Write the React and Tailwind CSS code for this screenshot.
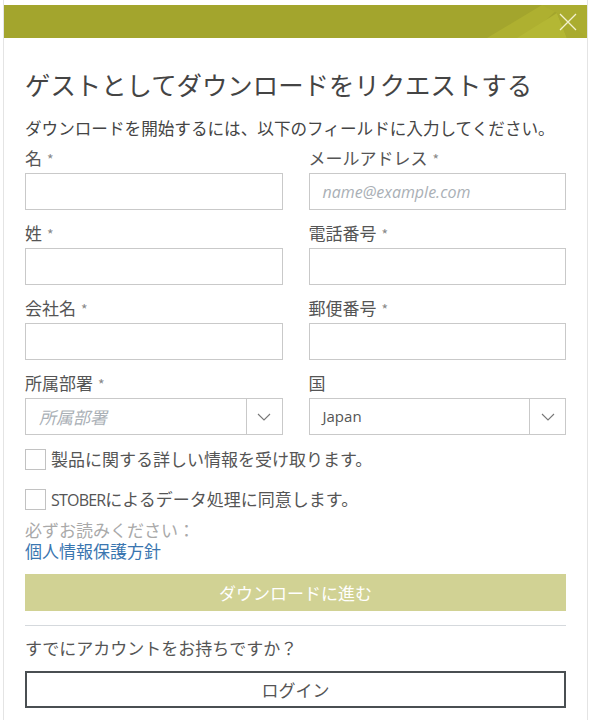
import React from "react";

const jp = { fontFamily: '"Noto Sans CJK JP", "Noto Sans", sans-serif' };

function Label({ children }) {
  return (
    <div className="h-[24px] leading-[24px] text-[17px] text-[#555] mb-[3px]">
      {children}
      {children !== "国" && <span className="text-[#888] ml-[5px] text-[14px]">*</span>}
    </div>
  );
}

function Input({ placeholder }) {
  return (
    <div className="h-[37px] border border-[#c9c9c9] bg-white flex items-center px-[13px]">
      {placeholder && (
        <span className="italic text-[#aab0b6] text-[16px]" style={{ fontFamily: '"Open Sans", sans-serif' }}>
          {placeholder}
        </span>
      )}
    </div>
  );
}

function Chevron() {
  return (
    <svg width="14" height="8" viewBox="0 0 14 8" fill="none" stroke="#777" strokeWidth="1.1">
      <path d="M1 1 L7 7 L13 1" />
    </svg>
  );
}

function Select({ value, placeholder }) {
  return (
    <div className="h-[37px] border border-[#c9c9c9] bg-white flex">
      <div className="flex-1 flex items-center px-[13px]">
        {placeholder ? (
          <span className="italic text-[#aab0b6] text-[17px]">{placeholder}</span>
        ) : (
          <span className="text-[#555] text-[15px]" style={{ fontFamily: '"Open Sans", sans-serif' }}>{value}</span>
        )}
      </div>
      <div className="w-[36px] border-l border-[#c9c9c9] flex items-center justify-center">
        <Chevron />
      </div>
    </div>
  );
}

function Field({ label, children }) {
  return (
    <div className="flex flex-col">
      <Label>{label}</Label>
      {children}
    </div>
  );
}

function Checkbox({ children }) {
  return (
    <div className="flex items-center gap-[5px] h-[22px]">
      <div className="w-[21px] h-[21px] border border-[#c2c2c2] bg-white shrink-0" />
      <div className="text-[17px] leading-[22px] text-[#555] whitespace-nowrap">{children}</div>
    </div>
  );
}

export default function App() {
  return (
    <div className="w-[591px] h-[720px] bg-white overflow-hidden" style={jp}>
      <div className="ml-[3px] w-[585px] h-[720px] border-l border-r border-[#e4e4e4] bg-white pt-[5px]">
        <div className="relative h-[33px] bg-[#a3a52d] overflow-hidden">
          <svg className="absolute right-0 top-0" width="100" height="33" viewBox="0 0 100 33">
            <polygon points="0,33 55,0 75,0 40,33" fill="#aeb030" />
            <polygon points="30,33 70,8 80,33" fill="#b4b734" />
            <polygon points="55,0 100,0 100,33 80,33 70,8" fill="#abad30" />
            <polygon points="70,8 100,33 80,33" fill="#a9ab2f" />
          </svg>
          <svg className="absolute right-[10px] top-[8px]" width="18" height="18" viewBox="0 0 18 18" stroke="#f3f1d0" strokeWidth="1.3">
            <path d="M1 1 L17 17 M17 1 L1 17" />
          </svg>
        </div>
        <div className="px-[21px]">
          <h1 className="mt-[28px] h-[36px] leading-[36px] text-[25.4px] text-[#444] font-normal whitespace-nowrap">
            ゲストとしてダウンロードをリクエストする
          </h1>
          <p className="mt-[14px] h-[24px] leading-[24px] text-[16.6px] text-[#444] whitespace-nowrap">
            ダウンロードを開始するには、以下のフィールドに入力してください。
          </p>
          <div className="mt-[6px] grid grid-cols-2 gap-x-[26px] gap-y-[11px]">
            <Field label="名"><Input /></Field>
            <Field label="メールアドレス"><Input placeholder="name@example.com" /></Field>
            <Field label="姓"><Input /></Field>
            <Field label="電話番号"><Input /></Field>
            <Field label="会社名"><Input /></Field>
            <Field label="郵便番号"><Input /></Field>
            <Field label="所属部署"><Select placeholder="所属部署" /></Field>
            <Field label="国"><Select value="Japan" /></Field>
          </div>
          <div className="mt-[13px]">
            <Checkbox>製品に関する詳しい情報を受け取ります。</Checkbox>
          </div>
          <div className="mt-[18px]">
            <Checkbox>
              <span style={{ fontFamily: '"Open Sans", sans-serif' }} className="text-[16px] tracking-[-0.8px]">STOBER</span>
              によるデータ処理に同意します。
            </Checkbox>
          </div>
          <p className="mt-[9px] h-[42px] leading-[21px] text-[17px] text-[#a9a9a9]">
            必ずお読みください：
            <br />
            <span className="text-[#3a76b0]">個人情報保護方針</span>
          </p>
          <div className="mt-[13px] h-[37px] bg-[#d1d294] flex items-center justify-center text-white text-[17px]">
            ダウンロードに進む
          </div>
          <div className="mt-[14px] border-t border-[#d5d9dd]" />
          <div className="mt-[10px] h-[24px] leading-[24px] text-[17px] text-[#555]">すでにアカウントをお持ちですか？</div>
          <div className="mt-[11px] h-[37px] border-2 border-[#4a4f52] flex items-center justify-center text-[17px] text-[#555]">
            ログイン
          </div>
        </div>
      </div>
    </div>
  );
}
